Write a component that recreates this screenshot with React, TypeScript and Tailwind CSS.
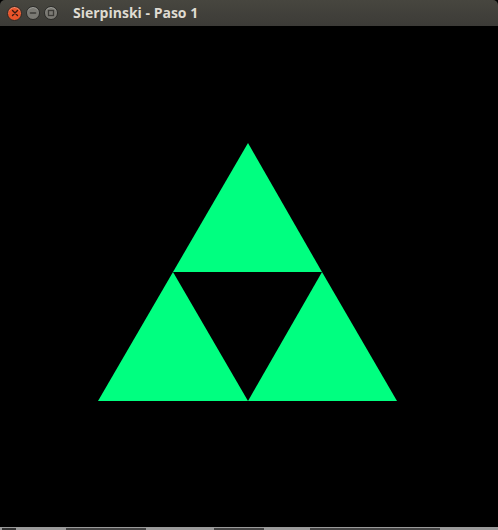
import React from 'react'

// Window chrome button (Ubuntu Ambiance style)
function ChromeButton({ kind }: { kind: 'close' | 'min' | 'max' }) {
  if (kind === 'close') {
    return (
      <div className="flex h-[15px] w-[15px] items-center justify-center rounded-full border border-[#2a2a27] bg-[#e9542a] shadow-[inset_0_1px_0_rgba(255,255,255,0.35)]">
        <svg width="8" height="8" viewBox="0 0 8 8">
          <path d="M1.5 1.5 L6.5 6.5 M6.5 1.5 L1.5 6.5" stroke="#3a1a10" strokeWidth="1.4" strokeLinecap="round" />
        </svg>
      </div>
    )
  }
  return (
    <div className="flex h-[14px] w-[14px] items-center justify-center rounded-full border border-[#2a2a27] bg-[#7b7a74] shadow-[inset_0_1px_0_rgba(255,255,255,0.3)]">
      <svg width="8" height="8" viewBox="0 0 8 8">
        {kind === 'min' ? (
          <path d="M1.5 4 L6.5 4" stroke="#3c3b37" strokeWidth="1.6" strokeLinecap="round" />
        ) : (
          <rect x="1.5" y="1.5" width="5" height="5" fill="none" stroke="#3c3b37" strokeWidth="1.3" />
        )}
      </svg>
    </div>
  )
}

export default function App() {
  return (
    <div className="flex h-[530px] w-[498px] flex-col bg-black" style={{ fontFamily: '"Open Sans", "DejaVu Sans", sans-serif' }}>
      <div className="flex h-[26px] shrink-0 items-center rounded-t-[5px] bg-gradient-to-b from-[#47463f] to-[#3c3b37] pl-[7px]">
        <div className="flex items-center gap-[4px]">
          <ChromeButton kind="close" />
          <ChromeButton kind="min" />
          <ChromeButton kind="max" />
        </div>
        <span className="ml-[15px] text-[14px] font-bold leading-none text-[#dfdbd2]">Sierpinski - Paso 1</span>
      </div>

      <div className="flex-1">
        <svg width="498" height="501" viewBox="0 26 498 501" className="block">
          <polygon points="248,143 173,272 322,272" fill="#00ff80" />
          <polygon points="173,272 98,401 248,401" fill="#00ff80" />
          <polygon points="322,272 248,401 397,401" fill="#00ff80" />
        </svg>
      </div>

      <div className="flex h-[3px] shrink-0 items-end gap-[6px] bg-[#9a9a9a] px-[2px]">
        <div className="h-[2px] w-[14px] bg-[#333]" />
        <div className="ml-[44px] h-[2px] w-[80px] bg-[#444]" />
        <div className="ml-[62px] h-[2px] w-[50px] bg-[#444]" />
        <div className="ml-[40px] h-[2px] w-[130px] bg-[#444]" />
      </div>
    </div>
  )
}
